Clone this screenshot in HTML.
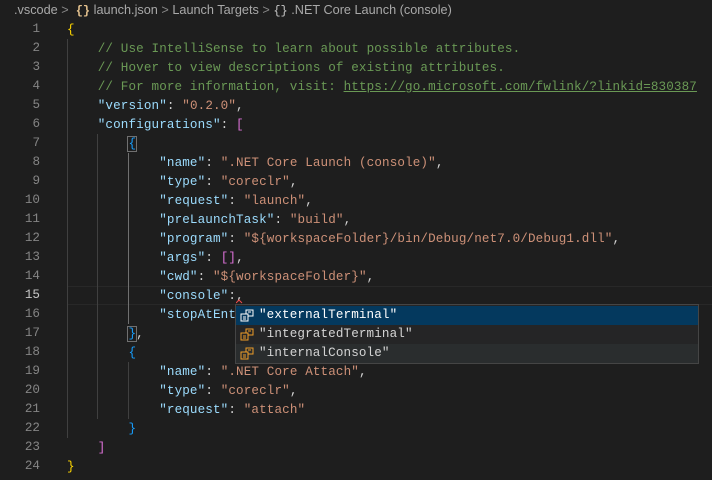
<!DOCTYPE html>
<html><head><meta charset="utf-8"><style>
body{margin:0;width:712px;height:480px;background:#1e1e1e;overflow:hidden;position:relative;font-family:"Liberation Mono",monospace;}
.bc{position:absolute;left:14px;top:0;height:20px;width:700px;font-family:"Liberation Sans",sans-serif;font-size:12.7px;color:#a9a9a9;line-height:20px;white-space:pre;}
.bc .ic{color:#e2c08d;font-family:"Liberation Mono",monospace;font-weight:bold;font-size:12px}
.bc .ic2{color:#c5c5c5;font-family:"Liberation Mono",monospace;font-size:12px}
.ln{position:absolute;left:0;width:40px;text-align:right;color:#858585;font-size:12.6px;line-height:19px;}
.cd{position:absolute;left:67px;font-size:12.6px;letter-spacing:0.125px;line-height:19px;white-space:pre;color:#d4d4d4;top:1px}
.k{color:#9cdcfe}.s{color:#ce9178}.c{color:#6a9955}.y{color:#ffd700}.p{color:#da70d6}.b{color:#179fff}
.g{position:absolute;width:1px;background:#404040}
.cur{position:absolute;left:67px;top:286px;width:645px;height:17px;border:1px solid #282828}
.pop{position:absolute;left:235px;top:304px;width:462px;height:58px;background:#252526;border:1px solid #454545;font-size:12.6px;letter-spacing:0.125px}
.row{position:absolute;left:0;width:462px;height:19px;line-height:19px;color:#d4d4d4;white-space:pre}
.row span{position:absolute;left:23px}
.row svg{position:absolute;left:4px;top:3px}
</style></head><body>
<div class="bc">.vscode <span style="color:#888">&gt;</span>  <span class="ic">{}</span> launch.json <span style="color:#888">&gt;</span> Launch Targets <span style="color:#888">&gt;</span> <span class="ic2">{}</span> .NET Core Launch (console)</div>
<div class="cur"></div>
<div class="g" style="left:67px;top:39px;height:399px"></div>
<div class="g" style="left:97px;top:134px;height:285px"></div>
<div class="g" style="left:128px;top:153px;height:171px;background:#707070"></div>
<div class="g" style="left:128px;top:362px;height:57px"></div>

<div class="ln" style="top:20px">1</div><div class="ln" style="top:39px">2</div><div class="ln" style="top:58px">3</div><div class="ln" style="top:77px">4</div><div class="ln" style="top:96px">5</div><div class="ln" style="top:115px">6</div><div class="ln" style="top:134px">7</div><div class="ln" style="top:153px">8</div><div class="ln" style="top:172px">9</div><div class="ln" style="top:191px">10</div><div class="ln" style="top:210px">11</div><div class="ln" style="top:229px">12</div><div class="ln" style="top:248px">13</div><div class="ln" style="top:267px">14</div><div class="ln" style="top:286px;color:#c6c6c6">15</div><div class="ln" style="top:305px">16</div><div class="ln" style="top:324px">17</div><div class="ln" style="top:343px">18</div><div class="ln" style="top:362px">19</div><div class="ln" style="top:381px">20</div><div class="ln" style="top:400px">21</div><div class="ln" style="top:419px">22</div><div class="ln" style="top:438px">23</div><div class="ln" style="top:457px">24</div>

<div class="cd" style="top:21px"><span class="y">{</span></div>
<div class="cd" style="top:40px"><span class="c">    // Use IntelliSense to learn about possible attributes.</span></div>
<div class="cd" style="top:59px"><span class="c">    // Hover to view descriptions of existing attributes.</span></div>
<div class="cd" style="top:78px"><span class="c">    // For more information, visit: <u>https://go.microsoft.com/fwlink/?linkid=830387</u></span></div>
<div class="cd" style="top:97px">    <span class="k">"version"</span>: <span class="s">"0.2.0"</span>,</div>
<div class="cd" style="top:116px">    <span class="k">"configurations"</span>: <span class="p">[</span></div>
<div class="cd" style="top:135px">        <span class="b" style="outline:1px solid #707070">{</span></div>
<div class="cd" style="top:154px">            <span class="k">"name"</span>: <span class="s">".NET Core Launch (console)"</span>,</div>
<div class="cd" style="top:173px">            <span class="k">"type"</span>: <span class="s">"coreclr"</span>,</div>
<div class="cd" style="top:192px">            <span class="k">"request"</span>: <span class="s">"launch"</span>,</div>
<div class="cd" style="top:211px">            <span class="k">"preLaunchTask"</span>: <span class="s">"build"</span>,</div>
<div class="cd" style="top:230px">            <span class="k">"program"</span>: <span class="s">"${workspaceFolder}/bin/Debug/net7.0/Debug1.dll"</span>,</div>
<div class="cd" style="top:249px">            <span class="k">"args"</span>: <span class="p">[]</span>,</div>
<div class="cd" style="top:268px">            <span class="k">"cwd"</span>: <span class="s">"${workspaceFolder}"</span>,</div>
<div class="cd" style="top:287px">            <span class="k">"console"</span>:,</div>
<div class="cd" style="top:306px">            <span class="k">"stopAtEnt</span></div>
<div class="cd" style="top:325px">        <span class="b" style="outline:1px solid #707070">}</span>,</div>
<div class="cd" style="top:344px">        <span class="b">{</span></div>
<div class="cd" style="top:363px">            <span class="k">"name"</span>: <span class="s">".NET Core Attach"</span>,</div>
<div class="cd" style="top:382px">            <span class="k">"type"</span>: <span class="s">"coreclr"</span>,</div>
<div class="cd" style="top:401px">            <span class="k">"request"</span>: <span class="s">"attach"</span></div>
<div class="cd" style="top:420px">        <span class="b">}</span></div>
<div class="cd" style="top:439px">    <span class="p">]</span></div>
<div class="cd" style="top:458px"><span class="y">}</span></div>
<svg style="position:absolute;left:236px;top:299px" width="8" height="5"><path d="M0 4 L3 1 L6 4" stroke="#f14c4c" fill="none"/></svg>

<div class="pop">
<div class="row" style="top:1px;background:#04395e;color:#fff"><svg width="14" height="13"><rect x="6" y="1" width="7" height="6" fill="#04395e" stroke="#fff"/><rect x="1" y="5" width="7" height="7" fill="#04395e" stroke="#fff"/><path d="M3 8h3M3 10h3M8 3h3" stroke="#fff"/></svg><span>"externalTerminal"</span></div>
<div class="row" style="top:20px"><svg width="14" height="13"><rect x="6" y="1" width="7" height="6" fill="#252526" stroke="#ee9d28"/><rect x="1" y="5" width="7" height="7" fill="#252526" stroke="#ee9d28"/><path d="M3 8h3M3 10h3M8 3h3" stroke="#ee9d28"/></svg><span>"integratedTerminal"</span></div>
<div class="row" style="top:39px;background:#2a2d2e"><svg width="14" height="13"><rect x="6" y="1" width="7" height="6" fill="#2a2d2e" stroke="#ee9d28"/><rect x="1" y="5" width="7" height="7" fill="#2a2d2e" stroke="#ee9d28"/><path d="M3 8h3M3 10h3M8 3h3" stroke="#ee9d28"/></svg><span>"internalConsole"</span></div>
</div>
</body></html>
